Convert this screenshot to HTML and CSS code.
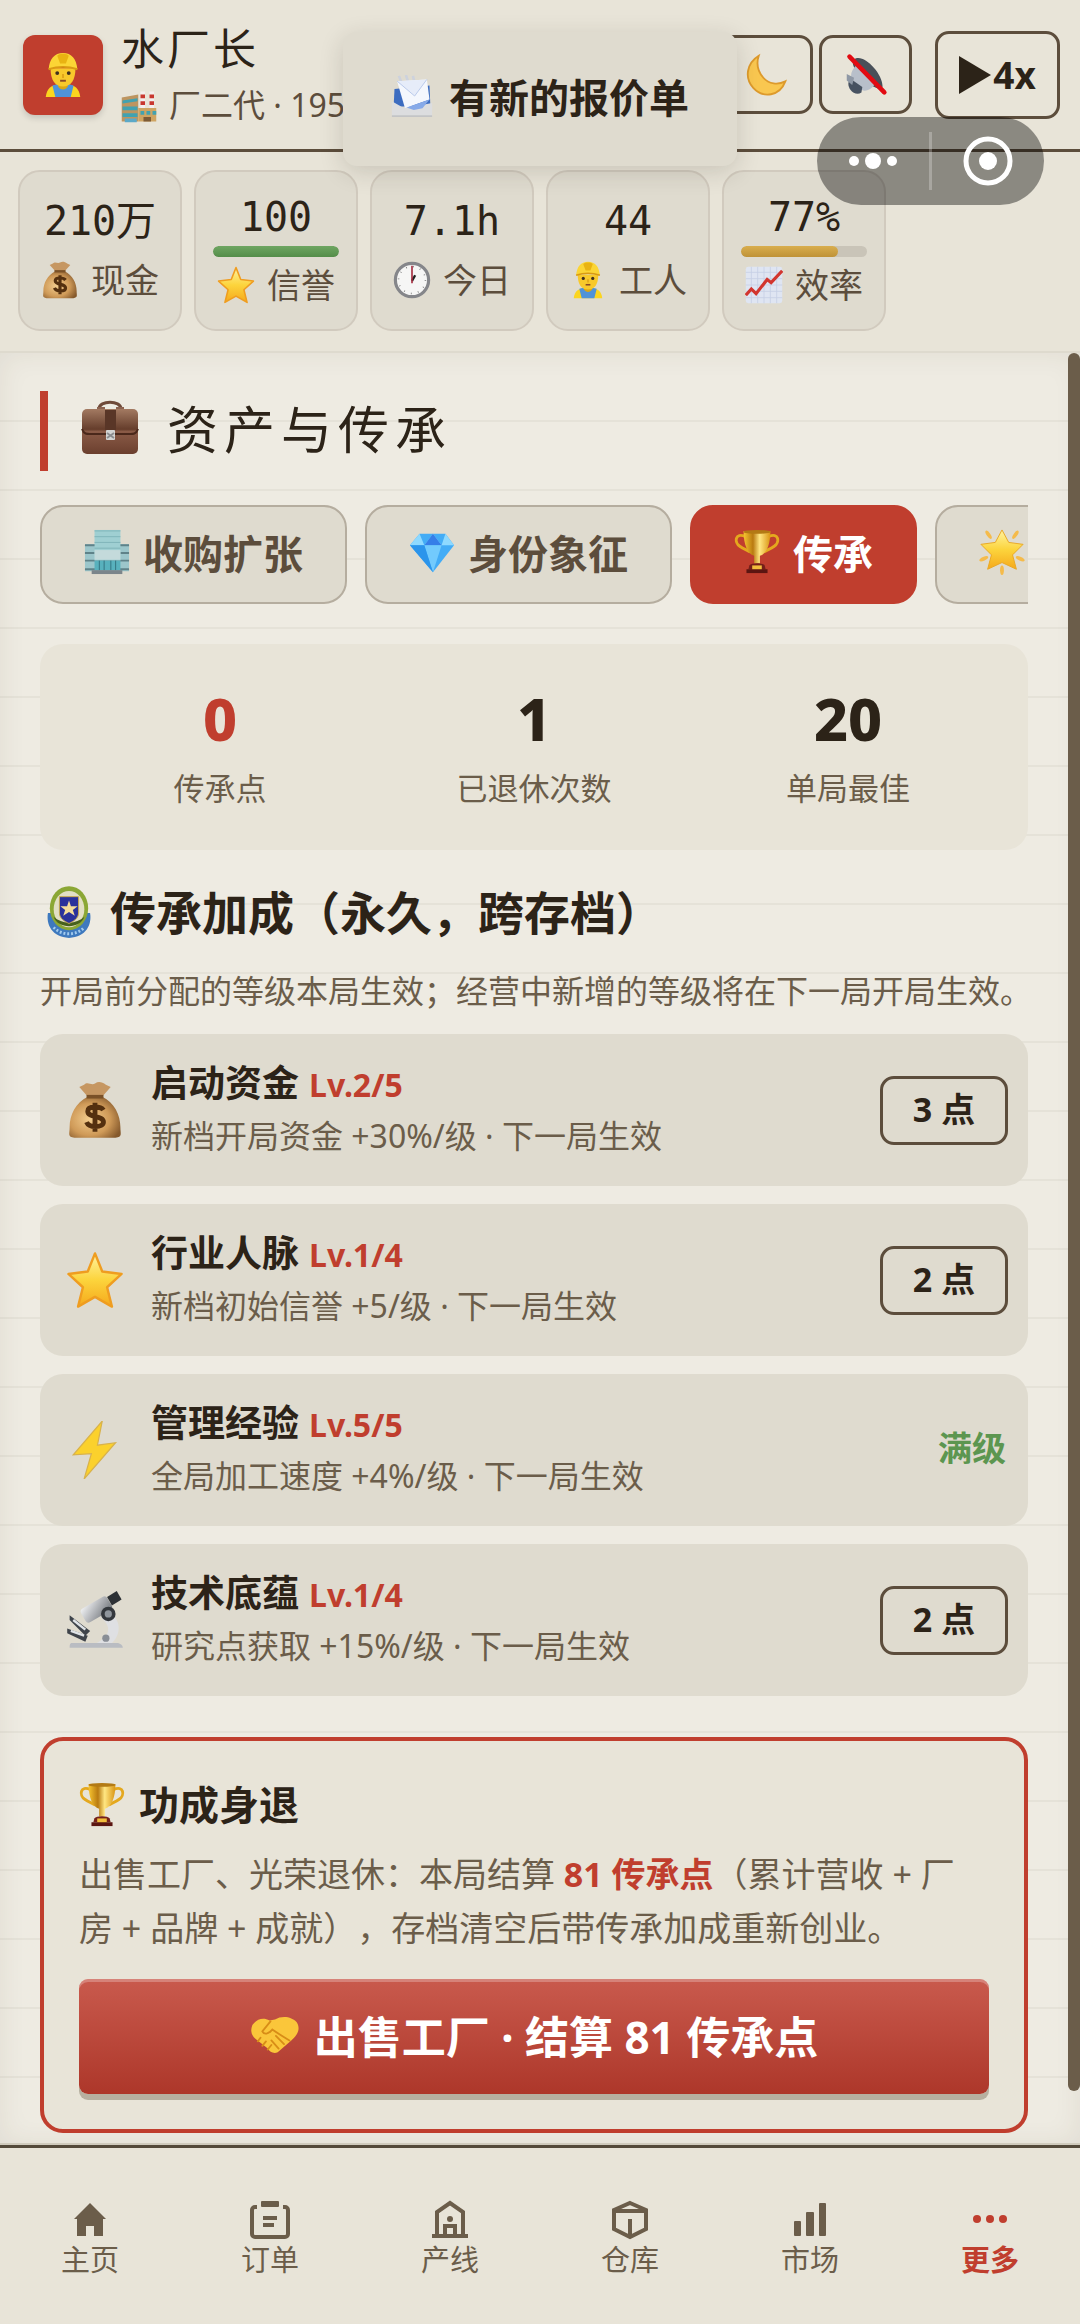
FILE: index.html
```html
<!DOCTYPE html>
<html lang="zh-CN">
<head>
  <meta charset="UTF-8">
  <meta name="viewport" content="width=device-width, initial-scale=1.0">
  <title>资产与传承</title>
  <link rel="stylesheet" href="styles.css">
</head>
<body>
  <!-- shared icons -->
  <svg class="sprite" aria-hidden="true">
    <defs>
      <linearGradient id="gold" x1="0" y1="0" x2="0" y2="1">
        <stop offset="0" stop-color="#fff3a0"/><stop offset=".5" stop-color="#fcd43c"/><stop offset="1" stop-color="#f5a91c"/>
      </linearGradient>
      <linearGradient id="cup" x1="0" y1="0" x2="1" y2="0">
        <stop offset="0" stop-color="#f7c531"/><stop offset=".35" stop-color="#b97a10"/><stop offset=".6" stop-color="#ffe682"/><stop offset="1" stop-color="#d99412"/>
      </linearGradient>
      <linearGradient id="leather" x1="0" y1="0" x2="0" y2="1">
        <stop offset="0" stop-color="#a37a62"/><stop offset=".45" stop-color="#653d2b"/><stop offset=".5" stop-color="#8a5b47"/><stop offset="1" stop-color="#6b3f2e"/>
      </linearGradient>
      <radialGradient id="sack" cx=".4" cy=".55" r=".65">
        <stop offset="0" stop-color="#f3cd8e"/><stop offset=".6" stop-color="#cf9a58"/><stop offset="1" stop-color="#85592c"/>
      </radialGradient>
      <linearGradient id="metal" x1="0" y1="0" x2="1" y2="1">
        <stop offset="0" stop-color="#f2f3f5"/><stop offset="1" stop-color="#6d7177"/>
      </linearGradient>
    </defs>
    <symbol id="i-worker" viewBox="0 0 48 48">
      <path d="M6 47c1-9 6-12 12-13h12c6 1 11 4 12 13z" fill="#fbd51f"/>
      <path d="M13 35l3 12h16l3-12-4-1H17z" fill="#4f93d8"/>
      <path d="M19 30h10v6c-2 4-8 4-10 0z" fill="#dba713"/>
      <path d="M11 17c0 13 5 19 13 19s13-6 13-19z" fill="#f8c92b"/>
      <path d="M9 18C10 7 15 1 24 1s14 6 15 17c-9-3-21-3-30 0z" fill="#fbd535"/>
      <path d="M18 4c1-3 11-3 12 0l-3 8h-6z" fill="#e9b312"/>
      <path d="M9 18c9-3 21-3 30 0" stroke="#d99a13" stroke-width="2" fill="none"/>
      <ellipse cx="18" cy="22" rx="2" ry="2" fill="#40301f"/><ellipse cx="30" cy="22" rx="2" ry="2" fill="#40301f"/>
      <path d="M23 23h2v4h-2z" fill="#e0a51a"/><path d="M21 30h6" stroke="#8b4a25" stroke-width="2"/>
    </symbol>
    <symbol id="i-factory" viewBox="0 0 48 48">
      <path d="M26 6h6v22h-6zM38 6h6v22h-6z" fill="#f3eeee"/>
      <path d="M26 10h6v5h-6zM26 19h6v5h-6zM38 10h6v5h-6zM38 19h6v5h-6z" fill="#c8372f"/>
      <path d="M1 14l22-4v36H1z" fill="#bd9560"/><path d="M23 28h24v18H23z" fill="#cfa462"/>
      <path d="M2 18l20-3v4L2 22zM2 26h20v5H2zM2 35h20v5H2zM26 32h5v5h-5zM34 32h5v5h-5zM42 32h5v5h-5z" fill="#41a2b1"/>
      <path d="M5 42h16v5H5z" fill="#5ca9c8"/><path d="M30 40h10v6H30z" fill="#7d5b36"/>
    </symbol>
    <symbol id="i-mail" viewBox="0 0 48 48">
      <path d="M9 1l4 10M17 0l3 9M25 1l2 8" stroke="#cdd2dd" stroke-width="3"/>
      <path d="M4 16l40-4 1 24H3z" fill="#3c6cc0"/>
      <path d="M7 7l34-2 3 23-28 10z" fill="#f4f7fd"/><path d="M7 7l20 17L41 5" fill="#e6ecf9" stroke="#b3c5e8"/>
      <path d="M1 30l14 8 32-6v15H1z" fill="#dcdddf"/><path d="M12 35l6 2 26-9-8 10-10 2z" fill="#86a9e8"/>
      <path d="M1 47h46" stroke="#c3c4c6" stroke-width="2"/>
    </symbol>
    <symbol id="i-moon" viewBox="0 0 48 48">
      <path d="M15 3C2 11-1 27 9 38c11 12 29 9 35-7-8 4-18 3-24-4S12 12 15 3z" fill="#f9c750" stroke="#dd9a2c" stroke-width="2"/>
    </symbol>
    <symbol id="i-mute" viewBox="0 0 48 48">
      <path d="M11 7c9-8 32 15 31 30-4 5-14-2-22-10S7 11 11 7z" fill="#495059"/>
      <path d="M13 14c7 2 18 13 20 21-5 7-13 8-16 3L9 29c-3-5 0-11 4-15z" fill="#b8bfca"/>
      <path d="M7 28l13 9-1 6c-4 3-9 1-12-3s-3-9 0-12z" fill="#475261"/><path d="M3 23l8 4-2 8-6-5z" fill="#8f98a5"/>
      <path d="M6 4l38 39" stroke="#e20b12" stroke-width="5" stroke-linecap="round"/>
    </symbol>
    <symbol id="i-bag" viewBox="0 0 48 48">
      <path d="M15 3c3-3 6 1 9-1s6-1 9 1l4 2-8 9H19L11 5z" fill="#c69762"/>
      <path d="M18 13h12c10 5 15 15 15 25 0 6 2 8-4 9H7c-6-1-4-3-4-9 0-10 5-20 15-25z" fill="url(#sack)"/>
      <path d="M17 13h14" stroke="#7a5127" stroke-width="3"/>
      <path d="M31 24c-2-3-13-4-13 1 0 6 13 3 13 9 0 5-12 5-14 0M24 18v24" stroke="#54300f" stroke-width="4" fill="none"/>
    </symbol>
    <symbol id="i-star" viewBox="0 0 48 48">
      <path d="M24 2l6 15 16 2-12 11 4 16-14-8-14 8 4-16L2 19l16-2z" fill="url(#gold)" stroke="#ef9d20" stroke-width="2" stroke-linejoin="round"/>
    </symbol>
    <symbol id="i-clock" viewBox="0 0 48 48">
      <circle cx="24" cy="24" r="21" fill="#f6f6f5" stroke="#85868a" stroke-width="4"/>
      <circle cx="24" cy="24" r="17" fill="none" stroke="#777" stroke-width="2" stroke-dasharray="1 8"/>
      <path d="M24 25l4-7" stroke="#222" stroke-width="3"/><path d="M24 28V6" stroke="#a3263a" stroke-width="2"/>
    </symbol>
    <symbol id="i-chart" viewBox="0 0 48 48">
      <rect x="1" y="1" width="46" height="46" rx="3" fill="#dfe5f2"/>
      <path d="M8 1v46M16 1v46M24 1v46M32 1v46M40 1v46M1 8h46M1 16h46M1 24h46M1 32h46M1 40h46" stroke="#c6cfe4"/>
      <path d="M1 37l7-8 6 6 14-18 5 4L47 6" fill="none" stroke="#d2362f" stroke-width="4"/>
    </symbol>
    <symbol id="i-case" viewBox="0 0 58 56">
      <path d="M18 10c0-9 22-9 22 0" fill="none" stroke="#6f4a39" stroke-width="3"/>
      <path d="M16 8h8v3h-8zM35 8h8v3h-8z" fill="#8c6350"/>
      <rect x="1" y="10" width="56" height="45" rx="5" fill="url(#leather)"/>
      <path d="M1 30c2 6 6 5 10 5h36c4 0 8 1 10-5" stroke="#4a281b" stroke-width="2" fill="none"/>
      <path d="M24 11h11v20H24z" fill="#593627"/><rect x="25" y="31" width="9" height="10" rx="1" fill="#d4d4d3"/>
      <path d="M26 34l7 5M33 34l-7 5" stroke="#8b8c8e" stroke-width="2"/>
    </symbol>
    <symbol id="i-office" viewBox="0 0 48 48">
      <path d="M1 16h46v28H1z" fill="#9cc6cb"/><path d="M1 17h46M1 25h46M1 33h46M1 42h46" stroke="#5f8289" stroke-width="2"/>
      <path d="M11 1h27v32H11z" fill="#9fcfd2"/><path d="M11 2h27M11 8h27M11 14h27M11 20h27" stroke="#7eb4b9"/>
      <path d="M11 22h27v10H11z" fill="#c4dadb"/><path d="M11 33h27v10H11z" fill="#58b1bd"/>
      <path d="M16 33v10M21 33v10M28 33v10M33 33v10" stroke="#32727e"/><path d="M8 43h32v4H8z" fill="#7b858b"/>
    </symbol>
    <symbol id="i-gem" viewBox="0 0 48 48">
      <path d="M11 5h27l9 12-22 28L1 17z" fill="#43acf6"/><path d="M11 5l5 12L25 5l9 12 4-12 9 12H1z" fill="#8ed9ff"/>
      <path d="M16 17L25 5l9 12z" fill="#367ee8"/><path d="M16 17h18l-9 28z" fill="#72cafd"/><path d="M1 17h15l9 28z" fill="#2b94eb"/>
    </symbol>
    <symbol id="i-trophy" viewBox="0 0 48 48">
      <path d="M12 8C1 3 0 14 6 18c4 3 8 4 11 6M36 8c11-5 12 6 6 10-4 3-8 4-11 6" fill="none" stroke="#e4a81e" stroke-width="3"/>
      <path d="M10 2h28c0 14-4 24-11 26v8h-6v-8C14 26 10 16 10 2z" fill="url(#cup)"/>
      <ellipse cx="24" cy="3" rx="14" ry="2" fill="#b37a14"/><path d="M16 38c2-3 14-3 16 0l1 4H15z" fill="#752019"/>
      <path d="M19 38h10v5H19z" fill="#f2bd3c"/><path d="M13 42h22v4H13z" fill="#5b1511"/>
    </symbol>
    <symbol id="i-glow" viewBox="0 0 48 48">
      <path d="M24 1l7 13 15 2-11 11 4 15-15-7-15 7 4-15L2 16l15-2z" fill="url(#gold)" stroke="#e9a722"/>
      <g fill="#f5bb4b"><ellipse cx="10" cy="6" rx="2" ry="5" transform="rotate(-35 10 6)"/><ellipse cx="38" cy="6" rx="2" ry="5" transform="rotate(35 38 6)"/><ellipse cx="5" cy="31" rx="5" ry="2" transform="rotate(-25 5 31)"/><ellipse cx="43" cy="31" rx="5" ry="2" transform="rotate(25 43 31)"/><ellipse cx="24" cy="43" rx="2" ry="5"/></g>
    </symbol>
    <symbol id="i-badge" viewBox="0 0 48 54">
      <path d="M2 28c-2 12 4 25 22 26 18-1 24-14 22-26z" fill="#3e79be"/>
      <path d="M8 43c8 9 24 9 32 0" stroke="#a3cbed" stroke-width="3" stroke-dasharray="2 2" fill="none"/>
      <ellipse cx="24" cy="23" rx="20" ry="23" fill="#8ba735"/><ellipse cx="24" cy="24" rx="16" ry="19" fill="#e2dfc4"/>
      <path d="M8 32c4 13 28 13 32 0-8 8-24 8-32 0z" fill="#47611c"/>
      <path d="M14 11h20v17c0 6-6 9-10 11-4-2-10-5-10-11z" fill="#2a329b" stroke="#c9a94a"/>
      <path d="M24 15l2 6h7l-5 4 2 6-6-4-6 4 2-6-5-4h7z" fill="#f4dd9b"/>
    </symbol>
    <symbol id="i-bolt" viewBox="0 0 48 48">
      <path d="M30 0L6 28l15-1-6 21 26-30-15 2z" fill="#fbd12c" stroke="#d8b24c" stroke-width="1"/>
    </symbol>
    <symbol id="i-scope" viewBox="0 0 48 48">
      <path d="M33 17c14 5 13 20 4 27H24c13-7 14-14 5-22z" fill="#dfe0e3"/>
      <path d="M5 43h37c3 0 5 2 5 4H3c0-2 0-4 2-4z" fill="#b9bcc2"/>
      <path d="M1 31l17 6-2 5L1 35zM3 20l17 13-4 4L3 24z" fill="#3f444b"/><path d="M4 33l11 4M6 24l10 8" stroke="#dfe3e7" stroke-width="2"/>
      <rect x="13" y="9" width="25" height="13" rx="3" transform="rotate(-30 25 16)" fill="url(#metal)"/>
      <path d="M34 5l8-5 4 7-8 5z" fill="#2d3135"/><circle cx="35" cy="19" r="6" fill="#34383d"/><circle cx="35" cy="19" r="3" fill="#8f959c"/>
      <circle cx="33" cy="39" r="3" fill="#898e96"/>
    </symbol>
    <symbol id="i-shake" viewBox="0 0 54 42">
      <path d="M2 10c5-7 12-9 19-5l6-1c8-5 19-3 24 3 5 8 0 15-6 20L30 40c-4 2-9 0-11-4L5 25C0 20 0 15 2 10z" fill="#fac63a"/>
      <path d="M22 6l-9 11c2 4 7 3 11-2 6 4 12 8 19 12M11 24l-3 4M17 28l-4 5M23 32l-4 5M28 22l9 9M23 27l8 9" fill="none" stroke="#d88d17" stroke-width="2" stroke-linecap="round"/>
    </symbol>
  </svg>

  <header class="topbar">
    <div class="avatar"><svg><use href="#i-worker"/></svg></div>
    <div class="who">
      <h1>水厂长</h1>
      <p><svg><use href="#i-factory"/></svg>厂二代 · 195</p>
    </div>
    <div class="tools">
      <button class="tool" type="button" aria-label="夜间模式"><svg><use href="#i-moon"/></svg></button>
      <button class="tool" type="button" aria-label="静音"><svg><use href="#i-mute"/></svg></button>
      <button class="speed" type="button"><svg viewBox="0 0 32 38"><path d="M0 0l32 19L0 38z"/></svg>4x</button>
    </div>
  </header>

  <section class="stats">
    <div class="stat"><span class="value">210万</span><span class="label"><svg><use href="#i-bag"/></svg>现金</span></div>
    <div class="stat"><span class="value">100</span><span class="bar"><i class="green" style="width: 100%"></i></span><span class="label"><svg><use href="#i-star"/></svg>信誉</span></div>
    <div class="stat"><span class="value">7.1h</span><span class="label"><svg><use href="#i-clock"/></svg>今日</span></div>
    <div class="stat"><span class="value">44</span><span class="label"><svg><use href="#i-worker"/></svg>工人</span></div>
    <div class="stat"><span class="value">77%</span><span class="bar"><i style="width: 77%"></i></span><span class="label"><svg><use href="#i-chart"/></svg>效率</span></div>
  </section>

  <main>
    <h2 class="page-title"><svg><use href="#i-case"/></svg>资产与传承</h2>

    <div class="tabs">
      <button class="tab" type="button"><svg><use href="#i-office"/></svg>收购扩张</button>
      <button class="tab" type="button"><svg><use href="#i-gem"/></svg>身份象征</button>
      <button class="tab active" type="button"><svg><use href="#i-trophy"/></svg>传承</button>
      <button class="tab" type="button" aria-label="成就"><svg><use href="#i-glow"/></svg></button>
    </div>

    <div class="summary">
      <div><b class="red">0</b><span>传承点</span></div>
      <div><b>1</b><span>已退休次数</span></div>
      <div><b>20</b><span>单局最佳</span></div>
    </div>

    <h3 class="section-title"><svg><use href="#i-badge"/></svg>传承加成（永久，跨存档）</h3>
    <p class="hint">开局前分配的等级本局生效；经营中新增的等级将在下一局开局生效。</p>

    <ul class="perks">
      <li>
        <svg><use href="#i-bag"/></svg>
        <div class="info"><h4>启动资金 <em>Lv.2/5</em></h4><p>新档开局资金 +30%/级 · 下一局生效</p></div>
        <button class="cost" type="button">3 点</button>
      </li>
      <li>
        <svg><use href="#i-star"/></svg>
        <div class="info"><h4>行业人脉 <em>Lv.1/4</em></h4><p>新档初始信誉 +5/级 · 下一局生效</p></div>
        <button class="cost" type="button">2 点</button>
      </li>
      <li>
        <svg><use href="#i-bolt"/></svg>
        <div class="info"><h4>管理经验 <em>Lv.5/5</em></h4><p>全局加工速度 +4%/级 · 下一局生效</p></div>
        <span class="max">满级</span>
      </li>
      <li>
        <svg><use href="#i-scope"/></svg>
        <div class="info"><h4>技术底蕴 <em>Lv.1/4</em></h4><p>研究点获取 +15%/级 · 下一局生效</p></div>
        <button class="cost" type="button">2 点</button>
      </li>
    </ul>

    <section class="retire">
      <h3><svg><use href="#i-trophy"/></svg>功成身退</h3>
      <p>出售工厂、光荣退休：本局结算 <b>81 传承点</b>（累计营收 + 厂房 + 品牌 + 成就），存档清空后带传承加成重新创业。</p>
      <button class="sell" type="button"><svg><use href="#i-shake"/></svg>出售工厂 · 结算 81 传承点</button>
    </section>
    <div class="scrollbar"></div>
  </main>

  <nav>
    <a href="#home">
      <svg viewBox="0 0 42 42"><path d="M21 4l16 16h-3v17h-9V27h-8v10H8V20H5z"/></svg>主页
    </a>
    <a href="#orders">
      <svg viewBox="0 0 42 42"><path d="M8 8H6a3 3 0 0 0-3 3v24a3 3 0 0 0 3 3h30a3 3 0 0 0 3-3V11a3 3 0 0 0-3-3h-2" class="line"/><rect x="12" y="2" width="18" height="6" rx="1"/><path d="M14 17h14v4H14zM14 24h11v4H14z"/></svg>订单
    </a>
    <a href="#lines">
      <svg viewBox="0 0 42 42"><path d="M8 37V13l13-9 13 9v24M3 37h36M16 37V27h10v10" class="line"/><circle cx="21" cy="20" r="3"/></svg>产线
    </a>
    <a href="#store">
      <svg viewBox="0 0 42 42"><path d="M21 4l16 7v19l-16 8-16-8V11zM5 12h32M21 20v18" class="line"/></svg>仓库
    </a>
    <a href="#market">
      <svg viewBox="0 0 42 42"><rect x="5" y="22" width="7" height="15" rx="1"/><rect x="17" y="13" width="8" height="24" rx="1"/><rect x="30" y="4" width="7" height="33" rx="1"/></svg>市场
    </a>
    <a href="#more" class="active">
      <svg viewBox="0 0 42 42"><circle cx="8" cy="20" r="4"/><circle cx="21" cy="20" r="4"/><circle cx="34" cy="20" r="4"/></svg>更多
    </a>
  </nav>

  <div class="toast" role="status"><svg><use href="#i-mail"/></svg>有新的报价单</div>

  <div class="capsule">
    <button type="button" aria-label="菜单"><svg viewBox="0 0 50 50"><circle cx="6" cy="25" r="5"/><circle cx="25" cy="25" r="8"/><circle cx="44" cy="25" r="5"/></svg></button>
    <button type="button" aria-label="关闭"><svg viewBox="0 0 50 50"><circle cx="25" cy="25" r="22" fill="none" stroke="#fff" stroke-width="5"/><circle cx="25" cy="25" r="9"/></svg></button>
  </div>
</body>
</html>
```
FILE: styles.css
```css
:root {
  --paper: #eeebe2;
  --panel: #e8e4d8;
  --card: #dfdbcf;
  --ink: #2c2318;
  --brown: #5c4d3c;
  --muted: #6b5d4a;
  --red: #c03e2e;
  --green: #5c9650;
}
* {
  margin: 0;
  padding: 0;
  box-sizing: border-box;
}
body {
  position: relative;
  display: flex;
  flex-direction: column;
  min-height: 100vh;
  background: var(--panel);
  color: var(--ink);
  font-family: "Noto Sans", "Noto Sans CJK SC", sans-serif;
}
button {
  font: inherit;
  color: inherit;
  background: none;
  border: none;
  cursor: pointer;
}
svg {
  display: block;
  flex: none;
}
.sprite {
  position: absolute;
  width: 0;
  height: 0;
}

/* top bar */
.topbar {
  display: flex;
  align-items: center;
  height: 152px;
  padding: 0 20px 0 23px;
  border-bottom: 3px solid var(--brown);
}
.avatar {
  display: flex;
  align-items: center;
  justify-content: center;
  width: 80px;
  height: 80px;
  border-radius: 12px;
  background: var(--red);
  box-shadow: 0 3px 6px rgba(0, 0, 0, 0.15);
}
.avatar svg {
  width: 46px;
  height: 46px;
}
.who {
  margin-left: 18px;
  padding-top: 4px;
}
.who h1 {
  font-size: 43px;
  font-weight: 400;
  line-height: 56px;
  letter-spacing: 3px;
}
.who p {
  display: flex;
  align-items: center;
  gap: 12px;
  font-size: 32px;
  line-height: 56px;
  color: var(--brown);
}
.who svg {
  width: 36px;
  height: 36px;
}
.tools {
  display: flex;
  align-items: center;
  gap: 6px;
  margin-left: auto;
}
.tool, .speed {
  display: flex;
  align-items: center;
  justify-content: center;
  border: 3px solid var(--brown);
  border-radius: 14px;
}
.tool {
  width: 93px;
  height: 79px;
}
.tool svg {
  width: 44px;
  height: 44px;
}
.speed {
  gap: 2px;
  width: 125px;
  height: 88px;
  margin-left: 17px;
  font-size: 37px;
  font-weight: 700;
}
.speed svg {
  width: 32px;
  height: 38px;
  fill: var(--ink);
}

/* stats */
.stats {
  display: flex;
  gap: 12px;
  padding: 18px 18px 20px;
}
.stat {
  display: flex;
  flex-direction: column;
  align-items: center;
  justify-content: center;
  width: 164px;
  height: 161px;
  padding: 0 17px;
  border: 2px solid #d1cabe;
  border-radius: 22px;
  background: var(--card);
}
.value {
  font-family: "DejaVu Sans Mono", "Noto Sans CJK SC", monospace;
  font-size: 40px;
  line-height: 58px;
}
.label {
  display: flex;
  align-items: center;
  gap: 12px;
  font-size: 34px;
  line-height: 60px;
  white-space: nowrap;
  color: var(--brown);
}
.label svg {
  width: 38px;
  height: 38px;
}
.bar {
  width: 100%;
  height: 11px;
  border-radius: 6px;
  overflow: hidden;
  background: #c9c4b8;
}
.bar i {
  display: block;
  height: 100%;
  border-radius: 6px;
  background: linear-gradient(#d9ae4e, #bf9237);
}
.bar .green {
  background: linear-gradient(#6fa662, #548d49);
}
.bar + .label {
  line-height: 56px;
}

/* page */
main {
  position: relative;
  flex: 1;
  padding: 38px 52px 12px 40px;
  background: repeating-linear-gradient(transparent 0 67px, #e5e2d8 67px 69px), var(--paper);
  box-shadow: inset 0 0 28px rgba(60, 50, 30, 0.08);
  border-top: 2px solid #dedace;
}
.page-title {
  display: flex;
  align-items: center;
  gap: 28px;
  height: 80px;
  margin-bottom: 34px;
  padding: 0 0 8px 33px;
  border-left: 8px solid var(--red);
  font-size: 51px;
  font-weight: 400;
  letter-spacing: 6px;
}
.page-title svg {
  width: 58px;
  height: 56px;
}
.tabs {
  display: flex;
  gap: 18px;
  margin-bottom: 40px;
  overflow: hidden;
}
.tab {
  display: flex;
  flex: none;
  align-items: center;
  gap: 13px;
  height: 99px;
  padding: 0 42px 6px;
  border: 2px solid #b5ad9f;
  border-radius: 23px;
  background: var(--card);
  color: var(--brown);
  font-size: 40px;
  font-weight: 700;
}
.tab svg {
  width: 46px;
  height: 46px;
}
.tab.active {
  border-color: var(--red);
  background: var(--red);
  color: #fff;
}
.summary {
  display: grid;
  grid-template-columns: repeat(3, 1fr);
  padding: 38px 23px;
  border-radius: 23px;
  background: var(--panel);
  text-align: center;
}
.summary b {
  display: block;
  margin-bottom: 10px;
  font-size: 59px;
  font-weight: 800;
  line-height: 72px;
}
.summary .red, .retire b {
  color: var(--red);
}
.summary span {
  display: block;
  font-size: 31px;
  line-height: 48px;
  color: var(--muted);
}
.section-title {
  display: flex;
  align-items: center;
  gap: 18px;
  margin: 34px 0 27px;
  padding-left: 6px;
  font-size: 46px;
  line-height: 56px;
}
.section-title svg {
  width: 46px;
  height: 54px;
}
.hint {
  margin-bottom: 19px;
  font-size: 32px;
  line-height: 48px;
  white-space: nowrap;
  color: var(--muted);
}
.perks {
  display: flex;
  flex-direction: column;
  gap: 18px;
  list-style: none;
}
.perks li {
  display: flex;
  align-items: center;
  padding: 0 20px 0 26px;
  border-radius: 23px;
  background: var(--card);
}
.perks svg {
  width: 58px;
  height: 58px;
  margin-right: 27px;
}
.info {
  flex: 1;
  padding: 22px 0 26px;
}
.info h4 {
  display: flex;
  align-items: baseline;
  gap: 10px;
  height: 56px;
  font-size: 37px;
  line-height: 54px;
}
.info em {
  font-size: 32px;
  font-style: normal;
  color: var(--red);
}
.info p {
  font-size: 32px;
  line-height: 48px;
  color: var(--muted);
}
.cost {
  width: 128px;
  height: 69px;
  padding-bottom: 6px;
  border: 3px solid var(--brown);
  border-radius: 14px;
  font-size: 34px;
  font-weight: 700;
}
.max {
  padding: 0 2px 8px 0;
  font-size: 34px;
  font-weight: 700;
  color: var(--green);
}
.retire {
  margin-top: 41px;
  padding: 35px;
  border: 4px solid var(--red);
  border-radius: 23px;
  background: var(--panel);
}
.retire h3 {
  display: flex;
  align-items: center;
  gap: 14px;
  margin-bottom: 13px;
  font-size: 40px;
  line-height: 58px;
}
.retire h3 svg {
  width: 46px;
  height: 46px;
}
.retire p {
  margin-bottom: 24px;
  padding-right: 16px;
  font-size: 34px;
  line-height: 54px;
  text-spacing-trim: space-all;
  color: var(--muted);
}
.sell {
  display: flex;
  align-items: center;
  justify-content: center;
  gap: 14px;
  width: 100%;
  height: 115px;
  padding-bottom: 4px;
  border-radius: 9px;
  background: linear-gradient(#c95a4d, #ad372a);
  box-shadow: 0 6px 0 #b7b0a0, inset 0 3px 0 rgba(255, 255, 255, 0.25);
  color: #fff;
  font-size: 44px;
  font-weight: 700;
}
.sell svg {
  width: 50px;
  height: 38px;
}
.scrollbar {
  position: absolute;
  top: 0;
  right: 0;
  width: 12px;
  height: 97%;
  border-radius: 6px;
  background: var(--muted);
}

/* bottom nav */
nav {
  position: relative;
  display: grid;
  grid-template-columns: repeat(6, 1fr);
  height: 179px;
  border-top: 3px solid #544a3a;
  box-shadow: 0 -2px 0 #d0cbbd;
  background: var(--panel);
}
nav a {
  display: flex;
  flex-direction: column;
  align-items: center;
  padding-top: 51px;
  font-size: 29px;
  line-height: 38px;
  color: var(--muted);
  text-decoration: none;
}
nav a.active {
  color: var(--red);
  font-weight: 700;
}
nav svg {
  width: 42px;
  height: 42px;
  fill: currentColor;
}
nav .line {
  fill: none;
  stroke: currentColor;
  stroke-width: 4;
}

/* overlays */
.toast {
  position: absolute;
  top: 32px;
  left: 50%;
  transform: translateX(-50%);
  display: flex;
  align-items: center;
  gap: 16px;
  height: 134px;
  padding: 0 48px 6px;
  border-radius: 14px;
  background: var(--card);
  box-shadow: 0 6px 24px rgba(44, 35, 24, 0.16);
  font-size: 40px;
  font-weight: 700;
  white-space: nowrap;
}
.toast svg {
  width: 42px;
  height: 42px;
}
.capsule {
  position: absolute;
  top: 117px;
  right: 36px;
  display: flex;
  align-items: center;
  width: 227px;
  height: 88px;
  border-radius: 44px;
  background: rgba(0, 0, 0, 0.4);
}
.capsule button {
  display: flex;
  flex: 1;
  align-items: center;
  justify-content: center;
  height: 58px;
}
.capsule button + button {
  border-left: 3px solid rgba(255, 255, 255, 0.25);
}
.capsule svg {
  width: 50px;
  height: 50px;
  fill: #fff;
}
```
